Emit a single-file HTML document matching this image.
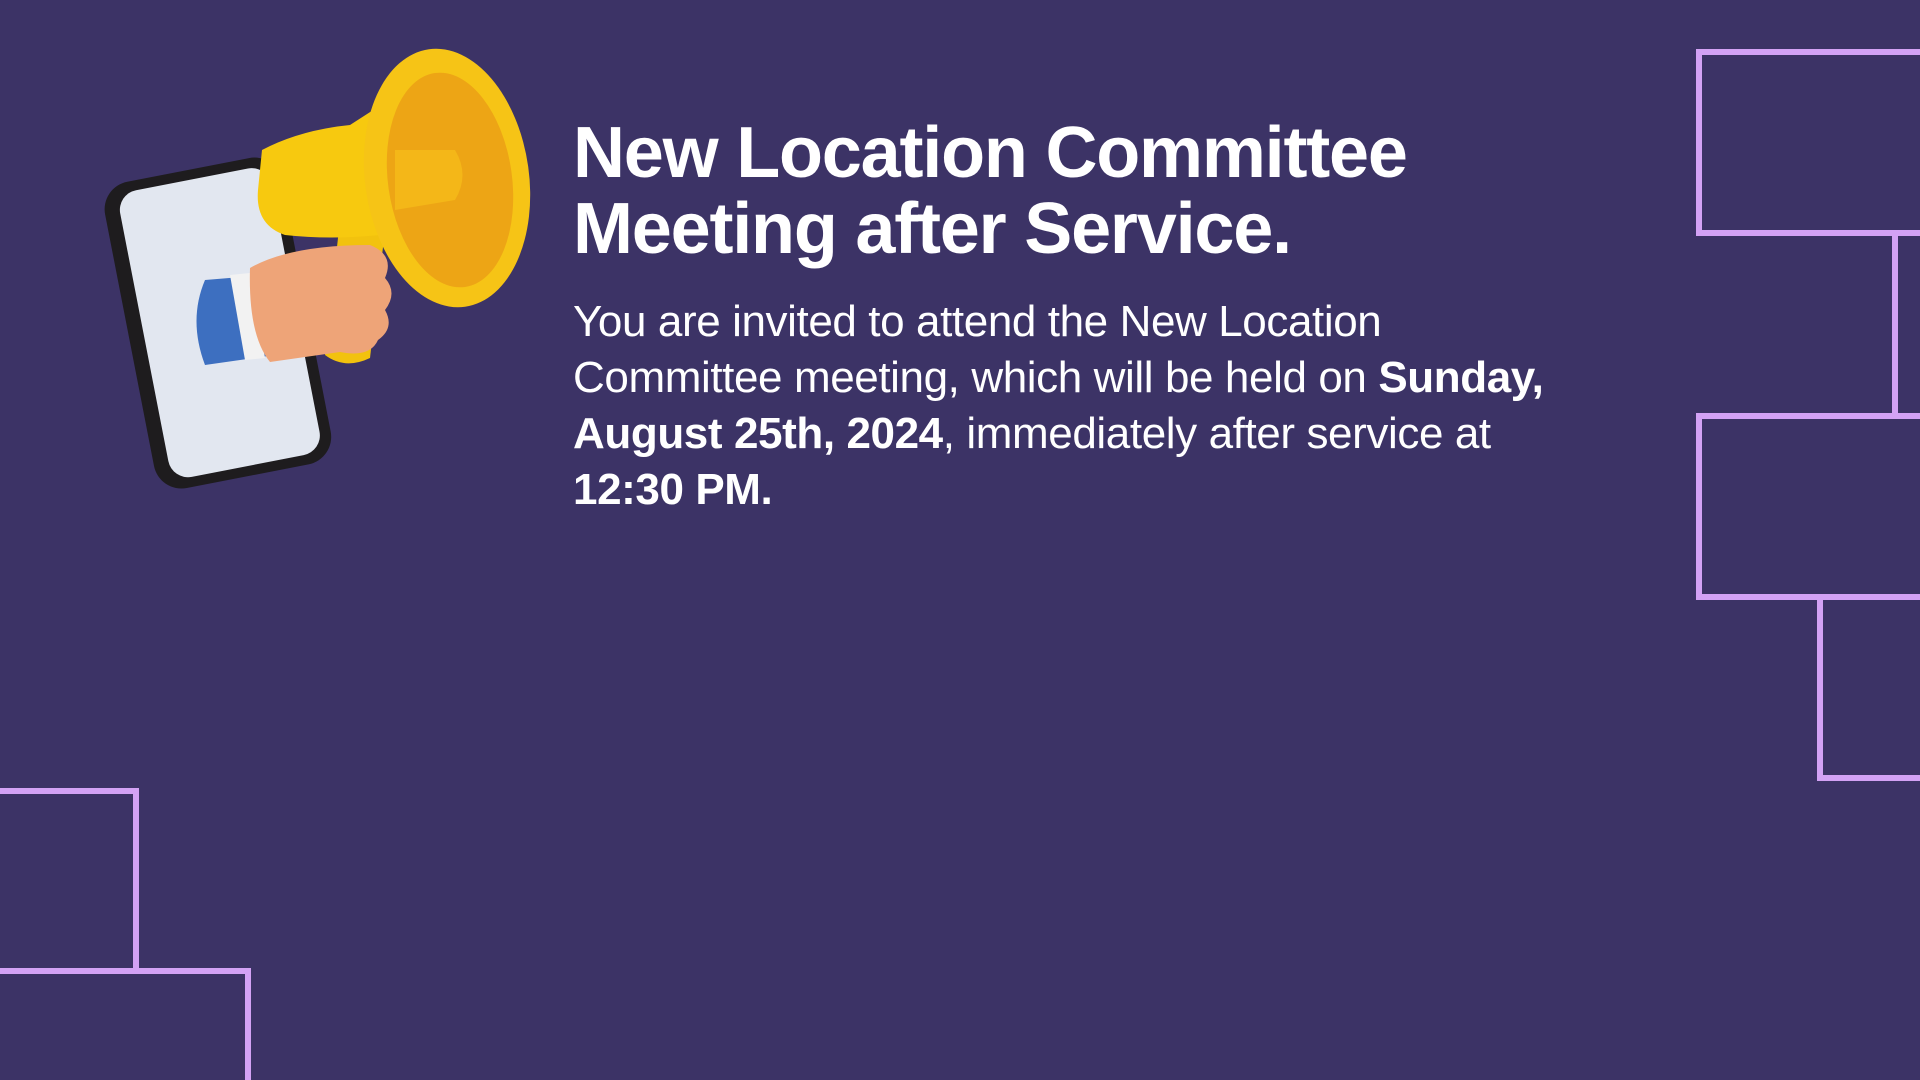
<!DOCTYPE html>
<html><head><meta charset="utf-8"><style>
html,body{margin:0;padding:0}
body{width:1920px;height:1080px;background:#3c3366;position:relative;overflow:hidden;font-family:"Liberation Sans",sans-serif;color:#fff}
h1{position:absolute;left:573px;top:115px;margin:0;font-size:72px;line-height:76px;font-weight:bold;letter-spacing:-1.2px}
p{position:absolute;left:573px;top:294px;margin:0;font-size:44px;line-height:56px;width:985px;letter-spacing:-0.4px}
svg{position:absolute;left:0;top:0}
</style></head><body>
<svg width="1920" height="1080" viewBox="0 0 1920 1080">
<g fill="none" stroke="#d3a2f5" stroke-width="6">
<path d="M1925 52 H1699 V233 H1925"/>
<path d="M1895 233 V416"/>
<path d="M1925 416 H1699 V597 H1925"/>
<path d="M1820 597 V778 H1925"/>
<path d="M-5 791 H136 V971"/>
<path d="M-5 971 H248 V1085"/>
</g>
<g transform="rotate(-11 213 324)">
<rect x="128" y="168" width="180" height="312" rx="28" fill="#1e1c1e"/>
<rect x="143" y="178" width="154" height="292" rx="20" fill="#e2e7f0"/>
</g>
<path d="M340 220 L325 355 Q345 370 370 358 L385 230 Z" fill="#f2c20e"/>
<path d="M262 150 Q300 130 350 125 L420 80 L450 280 L380 235 Q330 240 285 235 Q255 225 258 190 Z" fill="#f7c90f"/>
<ellipse cx="447" cy="178" rx="82" ry="130" transform="rotate(-8 447 178)" fill="#f6c416"/>
<ellipse cx="450" cy="180" rx="62" ry="108" transform="rotate(-8 450 180)" fill="#eda515"/>
<path d="M395 150 L455 150 Q470 175 455 200 L395 210 Z" fill="#f4b718"/>
<path d="M205 280 Q188 320 205 365 L275 355 L265 275 Z" fill="#3d6fc0"/>
<path d="M230 275 L245 360 L265 358 L250 273 Z" fill="#f2f2f2"/>
<path d="M250 268 Q290 245 370 245 Q395 255 385 278 Q398 293 385 310 Q395 328 378 340 Q370 358 340 352 L270 362 Q248 335 250 268 Z" fill="#eea478"/>
</svg>
<h1>New Location Committee<br>Meeting after Service.</h1>
<p>You are invited to attend the New Location Committee meeting, which will be held on <b>Sunday, August 25th, 2024</b>, immediately after service at <b>12:30 PM.</b></p>
</body></html>
